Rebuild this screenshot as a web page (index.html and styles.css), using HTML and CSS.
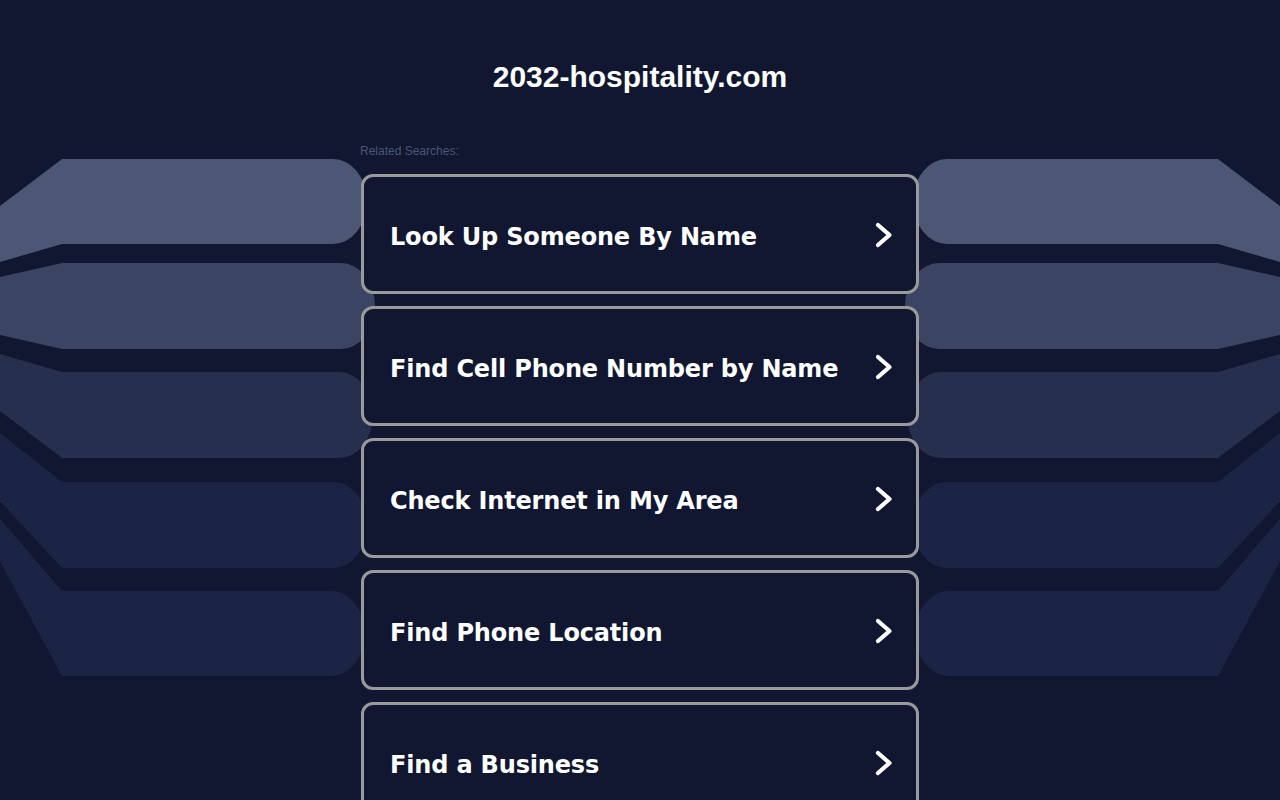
FILE: index.html
```html
<!DOCTYPE html>
<html lang="en">
<head>
<meta charset="utf-8">
<title>2032-hospitality.com</title>
<link rel="stylesheet" href="styles.css">
</head>
<body>
<div class="backdrop" aria-hidden="true">
  <svg class="bands bands-left" viewBox="0 0 380 800" width="380" height="800">
    <defs>
      <pattern id="dotsL" width="4" height="4" patternUnits="userSpaceOnUse">
        <rect width="4" height="4" fill="#1b2344"/>
        <rect width="1" height="1" fill="#212a4c"/>
        <rect x="2" y="2" width="1" height="1" fill="#212a4c"/>
      </pattern>
    </defs>
    <path fill="#4c5675" d="M62,159 H333 A34,42.5 0 0 1 367,201.5 A34,42.5 0 0 1 333,244 H62 L0,262 V206 Z"/>
    <path fill="#3b4463" d="M62,263 H341 A34,43 0 0 1 375,306 A34,43 0 0 1 341,349 H62 L0,335 V277 Z"/>
    <path fill="#272f4e" d="M62,372 H339 A34,43 0 0 1 373,415 A34,43 0 0 1 339,458 H62 L0,411 V354 Z"/>
    <path fill="url(#dotsL)" d="M62,482 H333 A34,43 0 0 1 367,525 A34,43 0 0 1 333,568 H62 L0,501 V433 Z"/>
    <path fill="url(#dotsL)" d="M62,591 H331 A34,42.5 0 0 1 365,633.5 A34,42.5 0 0 1 331,676 H62 L0,561 V519 Z"/>
  </svg>
  <svg class="bands bands-right" viewBox="0 0 380 800" width="380" height="800">
    <defs>
      <pattern id="dotsR" width="4" height="4" patternUnits="userSpaceOnUse">
        <rect width="4" height="4" fill="#1b2344"/>
        <rect width="1" height="1" fill="#212a4c"/>
        <rect x="2" y="2" width="1" height="1" fill="#212a4c"/>
      </pattern>
    </defs>
    <path fill="#4c5675" d="M62,159 H333 A34,42.5 0 0 1 367,201.5 A34,42.5 0 0 1 333,244 H62 L0,262 V206 Z"/>
    <path fill="#3b4463" d="M62,263 H341 A34,43 0 0 1 375,306 A34,43 0 0 1 341,349 H62 L0,335 V277 Z"/>
    <path fill="#272f4e" d="M62,372 H339 A34,43 0 0 1 373,415 A34,43 0 0 1 339,458 H62 L0,411 V354 Z"/>
    <path fill="url(#dotsR)" d="M62,482 H333 A34,43 0 0 1 367,525 A34,43 0 0 1 333,568 H62 L0,501 V433 Z"/>
    <path fill="url(#dotsR)" d="M62,591 H331 A34,42.5 0 0 1 365,633.5 A34,42.5 0 0 1 331,676 H62 L0,561 V519 Z"/>
  </svg>
</div>

<main class="page">
  <h1 class="domain">2032-hospitality.com</h1>
  <section class="related">
    <p class="related-label">Related Searches:</p>
    <ul class="links">
      <li><a class="link-card" href="#"><span class="link-text">Look Up Someone By Name</span><svg class="chev" viewBox="0 0 18 26" width="18" height="26"><polyline points="3,3 14.5,13 3,23"/></svg></a></li>
      <li><a class="link-card" href="#"><span class="link-text">Find Cell Phone Number by Name</span><svg class="chev" viewBox="0 0 18 26" width="18" height="26"><polyline points="3,3 14.5,13 3,23"/></svg></a></li>
      <li><a class="link-card" href="#"><span class="link-text">Check Internet in My Area</span><svg class="chev" viewBox="0 0 18 26" width="18" height="26"><polyline points="3,3 14.5,13 3,23"/></svg></a></li>
      <li><a class="link-card" href="#"><span class="link-text">Find Phone Location</span><svg class="chev" viewBox="0 0 18 26" width="18" height="26"><polyline points="3,3 14.5,13 3,23"/></svg></a></li>
      <li><a class="link-card" href="#"><span class="link-text">Find a Business</span><svg class="chev" viewBox="0 0 18 26" width="18" height="26"><polyline points="3,3 14.5,13 3,23"/></svg></a></li>
    </ul>
  </section>
</main>
</body>
</html>
```

FILE: styles.css
```css
html, body {
  margin: 0;
  padding: 0;
}

body {
  background: #111730;
  font-family: "Liberation Sans", Arial, sans-serif;
  color: #ffffff;
  min-height: 800px;
  position: relative;
  overflow-x: hidden;
}

.backdrop {
  position: absolute;
  inset: 0;
  z-index: 0;
  pointer-events: none;
}

.bands {
  position: absolute;
  top: 0;
  display: block;
}

.bands-left {
  left: 0;
}

.bands-right {
  right: 0;
  transform: scaleX(-1);
}

.page {
  position: relative;
  z-index: 1;
  width: 560px;
  margin: 0 auto;
  padding-top: 60px;
}

.domain {
  margin: 0;
  font-family: "Liberation Sans", Arial, sans-serif;
  font-weight: 700;
  font-size: 30px;
  line-height: 34px;
  text-align: center;
  color: #ffffff;
}

.related {
  margin-top: 50px;
}

.related-label {
  margin: 0 0 16px 0;
  font-size: 12px;
  line-height: 14px;
  color: #4b5676;
}

.links {
  list-style: none;
  margin: 0;
  padding: 0 1px;
  display: flex;
  flex-direction: column;
  gap: 12px;
}

.link-card {
  box-sizing: border-box;
  height: 120px;
  display: flex;
  align-items: center;
  justify-content: space-between;
  padding: 6px 23px 0 26px;
  border: 3px solid #9a9a9a;
  border-radius: 12px;
  background: #111730;
  text-decoration: none;
  color: #ffffff;
}

.link-text {
  font-family: "DejaVu Sans", Verdana, sans-serif;
  font-weight: 700;
  font-size: 24px;
  line-height: 28px;
  letter-spacing: -0.17px;
  color: #ffffff;
}

.chev {
  display: block;
  flex: none;
  margin-bottom: 4px;
  fill: none;
  stroke: #ffffff;
  stroke-width: 4.2;
  stroke-linecap: round;
  stroke-linejoin: round;
}
```
